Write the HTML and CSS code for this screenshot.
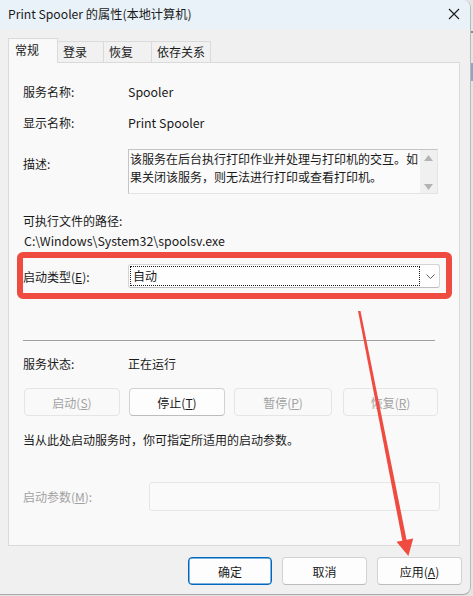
FILE: index.html
```html
<!DOCTYPE html>
<html lang="zh-CN">
<head>
<meta charset="utf-8">
<title>Print Spooler 的属性(本地计算机)</title>
<link rel="stylesheet" href="styles.css">
</head>
<body>
<div class="window">
  <div class="titlebar">
    <span class="title">Print Spooler 的属性(本地计算机)</span>
    <svg class="close" width="12" height="12" viewBox="0 0 12 12"><path d="M1 1 L11 11 M11 1 L1 11" stroke="#1a1a1a" stroke-width="1.1" fill="none"/></svg>
  </div>
  <div class="tabs">
    <div class="tab active">常规</div>
    <div class="tab t2">登录</div>
    <div class="tab t3">恢复</div>
    <div class="tab t4">依存关系</div>
  </div>
  <div class="panel">
    <div class="row r-name"><span class="label">服务名称:</span><span class="value lat">Spooler</span></div>
    <div class="row r-display"><span class="label">显示名称:</span><span class="value lat">Print Spooler</span></div>
    <div class="desc-row">
      <span class="label desc-label">描述:</span>
      <div class="desc-box">
        <div class="desc-text">该服务在后台执行打印作业并处理与打印机的交互。如<br>果关闭该服务，则无法进行打印或查看打印机。</div>
        <div class="scrollbar">
          <svg width="9" height="6" viewBox="0 0 9 6"><path d="M0 6 L4.5 0 L9 6 Z" fill="#b4b4b4"/></svg>
          <svg width="9" height="6" viewBox="0 0 9 6"><path d="M0 0 L4.5 6 L9 0 Z" fill="#b4b4b4"/></svg>
        </div>
      </div>
    </div>
    <div class="row r-pathlabel"><span>可执行文件的路径:</span></div>
    <div class="row r-path"><span class="path lat">C:\Windows\System32\spoolsv.exe</span></div>
    <div class="startup">
      <span class="label">启动类型(<u>E</u>):</span>
      <div class="select">
        <div class="focus">自动</div>
        <svg class="chev" width="9" height="5" viewBox="0 0 9 5"><path d="M0.5 0.5 L4.5 4.5 L8.5 0.5" stroke="#606060" stroke-width="1" fill="none"/></svg>
      </div>
    </div>
    <div class="separator"></div>
    <div class="row r-status"><span class="label">服务状态:</span><span class="value">正在运行</span></div>
    <div class="svc-buttons">
      <button class="btn disabled b-start">启动(<u>S</u>)</button>
      <button class="btn b-stop">停止(<u>T</u>)</button>
      <button class="btn disabled b-pause">暂停(<u>P</u>)</button>
      <button class="btn disabled b-resume">恢复(<u>R</u>)</button>
    </div>
    <div class="row r-hint"><span>当从此处启动服务时，你可指定所适用的启动参数。</span></div>
    <div class="param-row">
      <span class="param-label">启动参数(<u>M</u>):</span>
      <div class="param-input"></div>
    </div>
  </div>
  <div class="footer">
    <button class="btn dlg default">确定</button>
    <button class="btn dlg">取消</button>
    <button class="btn dlg">应用(<u>A</u>)</button>
  </div>
  <svg class="arrow" width="471" height="595" viewBox="0 0 471 595">
    <polygon points="358,311 360.5,311 406.8,541 402.6,542" fill="#ef4b40"/>
    <polygon points="396.5,541.8 413.2,538.4 408.4,556" fill="#ef4b40"/>
  </svg>
</div>
</body>
</html>
```
FILE: styles.css
```css
* { box-sizing: border-box; }
html, body { margin: 0; padding: 0; }
body {
  background: linear-gradient(to bottom,
    #e4e4e4 0, #e4e4e4 31px,
    #8c8c8c 31px, #8c8c8c 33px,
    #e4e4e4 33px, #e4e4e4 63px,
    #8ea6c6 63px, #8ea6c6 81px,
    #e4e4e4 81px, #e4e4e4 100%);
  font-family: "Noto Sans CJK SC", "Noto Sans", sans-serif;
  font-size: 12px;
  color: #1a1a1a;
  width: 473px;
  height: 596px;
  overflow: hidden;
}
.window {
  position: relative;
  width: 471px;
  height: 595px;
  background: #f0f0f0;
  border-right: 1px solid #b9b9b9;
  border-bottom: 1px solid #a9a9a9;
  border-radius: 0 8px 8px 0;
  overflow: hidden;
  display: flex;
  flex-direction: column;
}
.titlebar {
  height: 29px;
  background: #e9f2f9;
  display: flex;
  align-items: center;
  justify-content: space-between;
  padding: 0 10px 1px 8px;
}
.title { font-size: 12.2px; color: #1a1a1a; }
.close { display: block; }
.tabs {
  margin-top: 9px;
  height: 24px;
  padding-left: 8px;
  display: flex;
  align-items: flex-end;
  position: relative;
  z-index: 1;
}
.tab {
  height: 21px;
  line-height: 19px;
  border: 1px solid #dadada;
  border-bottom: none;
  border-left: none;
  background: #f1f1f1;
  padding-left: 5px;
  color: #1a1a1a;
}
.tab.active {
  height: 25px;
  margin-bottom: -1px;
  width: 50px;
  padding-left: 6px;
  line-height: 21px;
  background: #f9f9f9;
  border-left: 1px solid #dadada;
}
.t2 { width: 46px; }
.t3 { width: 48px; }
.t4 { width: 59px; }
.panel {
  margin-left: 8px;
  width: 452px;
  height: 484px;
  border: 1px solid #dadada;
  background: #f9f9f9;
  padding: 19px 0 0 14px;
}
.row {
  display: flex;
  height: 20px;
  line-height: 20px;
}
.label { width: 105px; flex: none; }
.value { color: #1a1a1a; }
.lat { font-size: 12.4px; }
.r-display { margin-top: 11px; }
.desc-row {
  margin-top: 16px;
  display: flex;
}
.desc-label { margin-top: 5px; line-height: 20px; }
.desc-box {
  width: 310px;
  height: 45px;
  border: 1px solid #c4c4c4;
  border-right-color: #e4e4e4;
  border-bottom-color: #e4e4e4;
  background: #fbfbfb;
  display: flex;
}
.desc-text {
  flex: 1;
  padding: 0 0 0 1px;
  line-height: 18px;
  white-space: nowrap;
  overflow: hidden;
}
.scrollbar {
  width: 17px;
  background: #f0f0f0;
  display: flex;
  flex-direction: column;
  align-items: center;
  justify-content: space-between;
  padding: 5px 0 3px;
}
.scrollbar svg { display: block; }
.r-pathlabel { margin-top: 17px; }
.path { padding-left: 1px; }
.startup {
  margin: 1px 7px 0 -6px;
  border: 6px solid #ef4b40;
  border-radius: 6px;
  padding: 6px 6px 5px 0;
  display: flex;
  align-items: center;
}
.select {
  width: 312px;
  height: 24px;
  border: 1px solid #d4d4d4;
  border-bottom-color: #bdbdbd;
  border-radius: 3px;
  background: #fefefe;
  display: flex;
  align-items: center;
  padding-left: 1px;
}
.focus {
  width: 290px;
  height: 20px;
  border: 1px dotted #1a1a1a;
  line-height: 18px;
  padding-left: 2px;
}
.chev { margin-left: 6px; display: block; }
.separator {
  margin-top: 41px;
  width: 412px;
  height: 1px;
  background: #a0a0a0;
}
.r-status { margin-top: 13px; }
.svc-buttons {
  margin-top: 14px;
  display: flex;
  height: 28px;
  padding-left: 1px;
}
.btn {
  font-family: inherit;
  font-size: 12px;
  height: 28px;
  padding: 0;
  margin: 0;
  border: 1px solid #d2d2d2;
  border-bottom-color: #bcbcbc;
  border-radius: 4px;
  background: #fdfdfd;
  color: #1a1a1a;
}
.btn.disabled {
  color: #a2a2a2;
  border-color: #e5e5e5;
  background: #f9f9f9;
}
.b-start { width: 96px; }
.b-stop { width: 96px; margin-left: 9px; }
.b-pause { width: 98px; margin-left: 9px; }
.b-resume { width: 95px; margin-left: 11px; }
.r-hint { margin-top: 14px; }
.param-row {
  margin-top: 32px;
  display: flex;
  align-items: center;
  height: 29px;
}
.param-label { width: 126px; color: #a2a2a2; }
.param-input {
  width: 291px;
  height: 29px;
  border: 1px solid #e6e6e6;
  border-radius: 3px;
  background: #fafafa;
}
.footer {
  margin-top: 11px;
  display: flex;
  justify-content: flex-end;
  padding-right: 8px;
}
.btn.dlg { width: 84px; margin-left: 10px; }
.btn.dlg + .btn.dlg { width: 85px; }
.btn.default {
  border: 1px solid #0067c0;
  box-shadow: inset 0 0 0 0.5px #0067c0;
}
.arrow {
  position: absolute;
  left: 0;
  top: 0;
  pointer-events: none;
}
```
